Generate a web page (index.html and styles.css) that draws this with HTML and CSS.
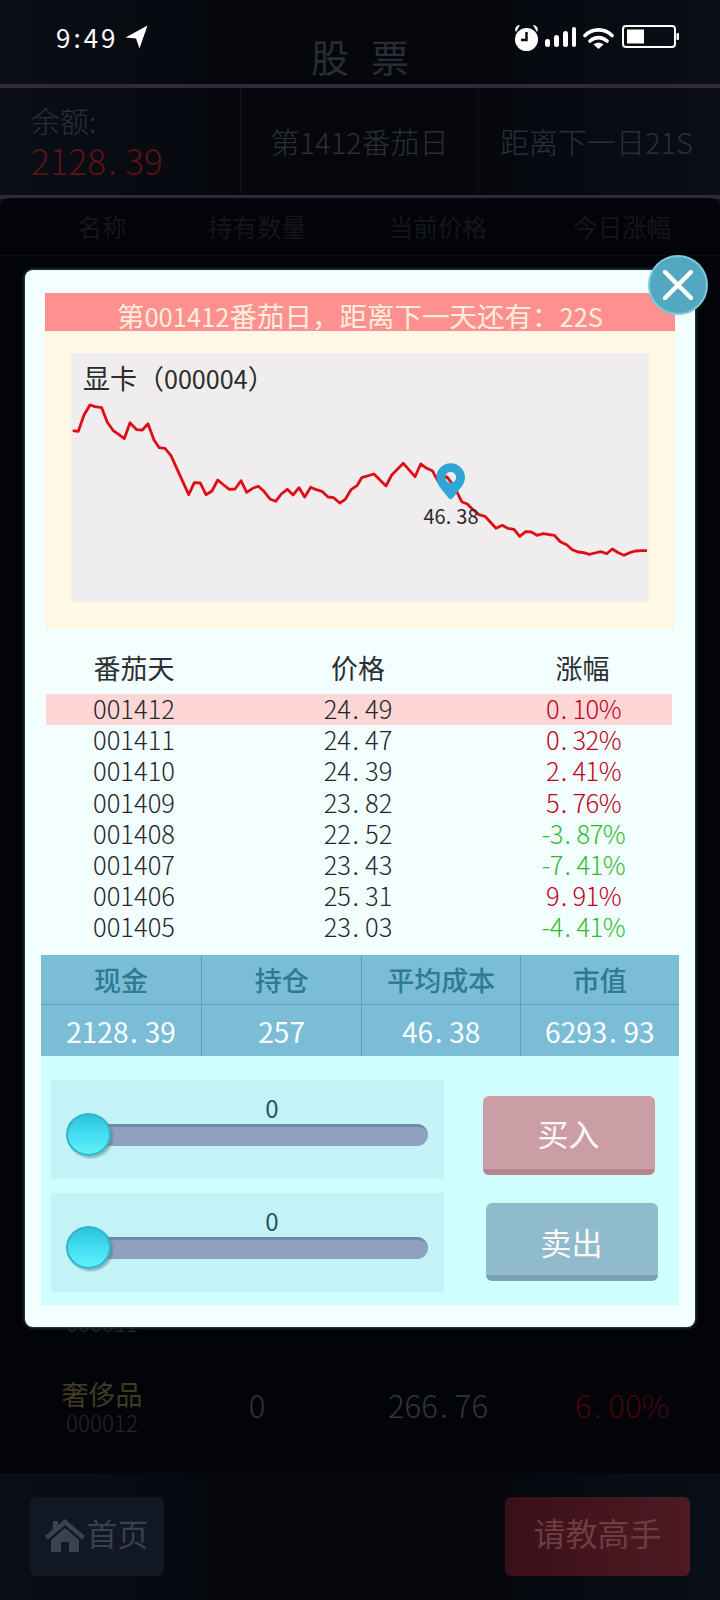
FILE: index.html
```html
<!DOCTYPE html>
<html lang="zh">
<head>
<meta charset="utf-8">
<title>股票</title>
<link rel="stylesheet" href="styles.css">
</head>
<body>
<div class="app">
  <div class="status">
    <div class="status-left">
      <span class="time">9:49</span>
      <svg class="loc" viewBox="0 0 23 24"><path d="M22.5 0.5 0.5 12.5 11 13.5 14.5 23.5Z" fill="#fff"/></svg>
    </div>
    <div class="status-right">
      <svg class="ic-alarm" viewBox="0 0 27 28"><circle cx="13.5" cy="15.5" r="11.5" fill="#fff"/><path d="M3 8C1 5 3 1 7 1ZM24 8C26 5 24 1 20 1Z" fill="#fff"/><path d="M13.5 8V16H8" fill="none" stroke="#07090f" stroke-width="2.4"/></svg>
      <svg class="ic-signal" viewBox="0 0 31 20"><rect x="0" y="12" width="5" height="8" rx="2.5" fill="#fff"/><rect x="9" y="8" width="5" height="12" rx="2.5" fill="#fff"/><rect x="18" y="4" width="5" height="16" rx="2.5" fill="#fff"/><rect x="27" y="0" width="4" height="20" rx="2" fill="#fff"/></svg>
      <svg class="ic-wifi" viewBox="0 0 31 22"><path d="M2 8.5C9.500 1 21.500 1 29 8.500M7 14C12 9.500 19 9.500 24 14" fill="none" stroke="#fff" stroke-width="3.600" stroke-linecap="round"/><path d="M15.500 22 10.500 17.500C13 15 18 15 20.500 17.500Z" fill="#fff"/></svg>
      <svg class="ic-batt" viewBox="0 0 57 23"><rect x="1" y="1" width="52" height="21" rx="3" fill="none" stroke="#fff" stroke-width="2"/><rect x="5" y="4.500" width="17" height="14" fill="#fff"/><rect x="54.500" y="8" width="2.500" height="7" rx="1" fill="#fff"/></svg>
    </div>
  </div>

  <header class="title-bar"><h1 class="title">股票</h1></header>

  <section class="info">
    <div class="info-cell balance">
      <div class="balance-label">余额:</div>
      <div class="balance-value">2128<span class="pt">.</span>39</div>
    </div>
    <div class="info-cell mid">第1412番茄日</div>
    <div class="info-cell last">距离下一日21S</div>
  </section>

  <main class="panel">
    <div class="panel-head">
      <span>名称</span><span>持有数量</span><span>当前价格</span><span>今日涨幅</span>
    </div>
    <div class="panel-list">
      <div class="stock-row">
        <div class="stock-name prev"><span class="code">000011</span></div>
      </div>
      <div class="stock-row">
        <div class="stock-name"><span class="name">奢侈品</span><span class="code">000012</span></div>
        <span class="stock-val">0</span>
        <span class="stock-val">266<span class="pt">.</span>76</span>
        <span class="stock-val dim-red">6<span class="pt">.</span>00%</span>
      </div>
    </div>
  </main>

  <footer class="bottom">
    <div class="btn-home">
      <svg class="home-ic" viewBox="0 0 40 33"><path d="M20 0 40 17 37 20.500 20 6 3 20.500 0 17 8 10V2H13V6Z" fill="#39424f"/><path d="M20 9 34 21V33H24V23H16V33H6V21Z" fill="#39424f"/></svg>
      <span>首页</span>
    </div>
    <div class="btn-ask">请教高手</div>
  </footer>

  <div class="modal">
    <button class="close" type="button" aria-label="关闭">
      <svg viewBox="0 0 30 30"><path d="M2 2 28 28M28 2 2 28" stroke="#fff" stroke-width="4.500" stroke-linecap="round"/></svg>
    </button>
    <div class="notice">第<span class="num">001412</span>番茄日，距离下一天还有：<span class="num">22S</span></div>
    <div class="chart-wrap">
      <div class="chart">
        <div class="chart-title">显卡（<span class="num">000004</span>）</div>
        <svg class="chart-svg" viewBox="71 353 578 249">
          <polyline class="line" points="72.700,430.700 78.300,431.300 84,415 90,405 95,406.700 101.700,407.700 107.300,422.300 113.300,430.700 119,434.700 124.300,438.700 130,422.700 136.700,429.700 142.300,430 148,423.700 154,440 159.300,447.700 165,448.300 171,455.700 188.700,494.700 194.300,482.700 200.300,483 206,494.700 212,491 217.700,480 223.700,485 229.300,489.300 235,489 241,480.700 246.700,492.300 252.700,488.300 258.300,486.300 264,491.300 270,499 275.700,501.300 281.300,494 287.300,489.300 293,495 299,487.700 304.700,497 310.700,487.300 316.300,489.700 322,491.300 328,497 333.700,497.700 339.700,503 345.300,499.300 351,489.700 357,485.700 361.700,477.700 374,474 386,486 391.700,475 403.300,463.300 415,476.700 420.700,464 426.700,468.300 432.300,470.700 438.300,481.700 446.700,476.700 450.700,481.700 456.700,491.700 461.700,501.700 467.300,504 473.300,510 479,514.700 485,516.300 496,528.300 502.300,525.300 507.700,528.300 514,529.300 519.700,536.300 525.700,531.700 531.300,532 537,535.300 543,533.700 554.300,535.300 560.300,541.700 566.700,544.700 572.300,549.700 578,552 583.700,552.700 589.300,554.300 595,553 600.700,551.700 606.700,553.700 612.300,549 618.300,552.700 624,555.300 629.700,552.700 635.300,551 641.300,550.700 647,550.700"/>
          <path class="pin" fill-rule="evenodd" d="M450.700 463.300C442.700 463.300 436.300 469.700 436.300 477.500C436.300 481 438 484.500 440 487.500L449 498.500C450 499.600 451.400 499.600 452.400 498.500L461 487.500C463.300 484.500 465 481 465 477.500C465 469.700 458.700 463.300 450.700 463.300ZM450.700 471.800A5.500 5.500 0 1 1 450.700 482.800A5.500 5.500 0 1 1 450.700 471.800Z"/>
          <text class="pin-label" x="451" y="524">46<tspan dx="0">.</tspan><tspan dx="5">38</tspan></text>
        </svg>
      </div>
    </div>

    <div class="history">
      <div class="hist-row hist-head"><span>番茄天</span><span>价格</span><span>涨幅</span></div>
      <div class="hist-row today"><span>001412</span><span>24<span class="pt">.</span>49</span><span class="up">0<span class="pt">.</span>10%</span></div>
      <div class="hist-row"><span>001411</span><span>24<span class="pt">.</span>47</span><span class="up">0<span class="pt">.</span>32%</span></div>
      <div class="hist-row"><span>001410</span><span>24<span class="pt">.</span>39</span><span class="up">2<span class="pt">.</span>41%</span></div>
      <div class="hist-row"><span>001409</span><span>23<span class="pt">.</span>82</span><span class="up">5<span class="pt">.</span>76%</span></div>
      <div class="hist-row"><span>001408</span><span>22<span class="pt">.</span>52</span><span class="down">-3<span class="pt">.</span>87%</span></div>
      <div class="hist-row"><span>001407</span><span>23<span class="pt">.</span>43</span><span class="down">-7<span class="pt">.</span>41%</span></div>
      <div class="hist-row"><span>001406</span><span>25<span class="pt">.</span>31</span><span class="up">9<span class="pt">.</span>91%</span></div>
      <div class="hist-row"><span>001405</span><span>23<span class="pt">.</span>03</span><span class="down">-4<span class="pt">.</span>41%</span></div>
    </div>

    <div class="stats">
      <div class="stat-h">现金</div><div class="stat-h">持仓</div><div class="stat-h">平均成本</div><div class="stat-h">市值</div>
      <div class="stat-v">2128<span class="pt">.</span>39</div><div class="stat-v">257</div><div class="stat-v">46<span class="pt">.</span>38</div><div class="stat-v">6293<span class="pt">.</span>93</div>
    </div>

    <div class="trade">
      <div class="sliders">
        <div class="slider-box">
          <div class="slider-num">0</div>
          <div class="track"><span class="thumb"></span></div>
        </div>
        <div class="slider-box">
          <div class="slider-num">0</div>
          <div class="track"><span class="thumb"></span></div>
        </div>
      </div>
      <div class="actions">
        <button class="act buy" type="button">买入</button>
        <button class="act sell" type="button">卖出</button>
      </div>
    </div>
  </div>
</div>
</body>
</html>
```
FILE: styles.css
```css
* { box-sizing: border-box; }
html, body { margin: 0; padding: 0; }
body {
  font-family: "Noto Sans CJK SC", "Noto Sans", sans-serif;
  font-weight: 400;
  background: #05070d;
}
.app {
  position: relative;
  width: 720px;
  height: 1600px;
  overflow: hidden;
  display: flex;
  flex-direction: column;
  background: linear-gradient(90deg, #0a0f18 0%, #05070c 35%, #05070c 65%, #0a0f18 100%);
}
.pt { padding: 0 .24em 0 .06em; }
.num { font-size: .93em; }

/* status bar */
.status {
  position: absolute;
  top: 0;
  left: 0;
  right: 0;
  height: 74px;
  padding: 24px 41px 0 56px;
  display: flex;
  justify-content: space-between;
  align-items: flex-start;
  color: #fff;
}
.status-left { display: flex; align-items: center; gap: 6px; height: 26px; }
.time { font-size: 26px; line-height: 26px; letter-spacing: 3px; }
.loc { width: 23px; height: 24px; }
.status-right { display: flex; align-items: flex-start; }
.ic-alarm { width: 27px; height: 28px; }
.ic-signal { width: 31px; height: 20px; margin: 3px 0 0 5px; }
.ic-wifi { width: 31px; height: 22px; margin: 3px 0 0 7px; }
.ic-batt { width: 57px; height: 23px; margin: 1px 0 0 8px; }

/* title */
.title-bar {
  height: 88px;
  border-bottom: 4px solid #33293a;
  text-align: center;
}
.title {
  margin: 0;
  padding: 31px 0 0 22px;
  font-size: 38px;
  line-height: 50px;
  font-weight: 400;
  letter-spacing: 22px;
  color: #2a2d35;
}

/* info */
.info {
  height: 111px;
  flex: none;
  display: grid;
  grid-template-columns: 241px 238px 241px;
  border-bottom: 4px solid #33293a;
  color: #2c2f37;
}
.info-cell { display: flex; align-items: center; justify-content: center; font-size: 29px; font-weight: 300; padding-bottom: 2px; border-right: 1px solid #11141b; white-space: nowrap; }
.info-cell.last { border-right: 0; padding-right: 6px; }
.balance { flex-direction: column; align-items: flex-start; padding-left: 31px; }
.balance-label { font-size: 29px; line-height: 38px; margin-top: 3px; margin-bottom: -2px; }
.balance-value { font-size: 35px; line-height: 46px; color: #5a1414; }

/* panel */
.panel {
  flex: 1;
  display: flex;
  flex-direction: column;
  min-height: 0;
  background: #03040a;
  border-radius: 10px 10px 0 0;
  margin-top: -1px;
}
.panel-head {
  height: 58px;
  flex: none;
  padding: 0 0 1px 12px;
  display: grid;
  grid-template-columns: 180px 130px 232px 136px;
  align-items: center;
  justify-items: center;
  font-size: 24.500px;
  color: #14161c;
  border-bottom: 1px solid #0b0c10;
}
.panel-list {
  flex: 1;
  display: flex;
  flex-direction: column;
  justify-content: flex-end;
  padding-bottom: 17px;
}
.stock-row {
  height: 99px;
  flex: none;
  padding-left: 12px;
  display: grid;
  grid-template-columns: 180px 130px 232px 136px;
  align-items: center;
  justify-items: center;
  font-size: 31px;
  font-weight: 300;
  color: #31353d;
}
.stock-name { display: flex; flex-direction: column; align-items: center; }
.stock-name.prev { margin-top: 28px; }
.stock-val { margin-bottom: 4px; }
.name { font-size: 27px; font-weight: 400; line-height: 34px; margin-bottom: -4px; color: #403b22; }
.code { font-size: 22.500px; line-height: 30px; color: #23272f; }
.dim-red { color: #440609; }

/* bottom */
.bottom {
  height: 127px;
  flex: none;
  padding: 24px 30px 24px;
  display: flex;
  justify-content: space-between;
  align-items: flex-start;
}
.btn-home {
  width: 134px;
  height: 79px;
  border-radius: 6px;
  background: #111824;
  display: flex;
  align-items: center;
  justify-content: center;
  gap: 2px;
  font-size: 31px;
  color: #39404c;
  padding: 0 1px 9px 0;
}
.home-ic { width: 40px; height: 33px; flex: none; margin-top: 7px; }
.btn-ask {
  width: 185px;
  height: 79px;
  border-radius: 6px;
  background: linear-gradient(90deg, #3a1018, #4e1a24);
  display: flex;
  align-items: center;
  justify-content: center;
  font-size: 32px;
  color: #6d3d42;
  padding-bottom: 9px;
}

/* modal */
.modal {
  position: absolute;
  top: 270px;
  left: 25px;
  width: 670px;
  height: 1057px;
  padding: 23px 16px 0;
  background: #f3ffff;
  border-radius: 8px;
  box-shadow: 0 0 3px 1px #2b4a55;
}
.close {
  position: absolute;
  top: -15px;
  right: -13px;
  width: 60px;
  height: 60px;
  padding: 13px;
  border-radius: 50%;
  border: 2px solid #80c9d8;
  background: #53a8c1;
}
.close svg { display: block; width: 30px; height: 30px; }
.notice {
  margin: 0 4px;
  height: 38px;
  padding-top: 4px;
  background: #ff9090;
  color: #ffeedd;
  font-size: 27.500px;
  line-height: 37px;
  text-align: center;
  white-space: nowrap;
}
.chart-wrap {
  margin: 0 4px;
  height: 298px;
  padding: 22px 26px 27px;
  background: #fff8e6;
}
.chart { position: relative; width: 578px; height: 249px; background: #efeded; }
.chart-title {
  position: absolute;
  top: 8px;
  left: 12px;
  font-size: 27px;
  line-height: 34px;
  color: #2c2c2c;
  white-space: nowrap;
}
.chart-svg { display: block; width: 578px; height: 249px; }
.line { fill: none; stroke: #e00d16; stroke-width: 2.800; stroke-linejoin: round; }
.pin { fill: #2fa6d6; }
.pin-label { font-size: 20px; fill: #2c2c2c; text-anchor: middle; }

/* history */
.history { padding: 13px 7px 0 5px; height: 326px; color: #22262a; font-size: 25.500px; font-weight: 300; }
.hist-row {
  display: grid;
  grid-template-columns: 176px 272px 177px;
  justify-items: center;
  align-items: center;
  height: 31.200px;
  padding-bottom: 3px;
  line-height: 28px;
}
.hist-head { height: 52px; padding-bottom: 0; color: #2b2f33; font-size: 27px; font-weight: 400; }
.today { background: #ffd6d6; }
.up { color: #c4001c; letter-spacing: -.6px; padding-left: 2px; }
.down { color: #2fbb2c; letter-spacing: -.5px; padding-left: 2px; }

/* stats */
.stats {
  height: 101px;
  display: grid;
  grid-template-columns: 161px 160.300px 158.700px 157.700px;
  grid-template-rows: 50px 51px;
  background: #7bbdd6;
}
.stat-h, .stat-v {
  display: flex;
  align-items: center;
  justify-content: center;
  border-right: 1px solid #5f9db6;
}
.stat-h:nth-child(4), .stat-v:nth-child(8) { border-right: 0; }
.stat-h {
  border-bottom: 1px solid #5f9db6;
  font-size: 27px;
  font-weight: 500;
  color: #2f7a92;
}
.stat-v { font-size: 28px; color: #f8feff; }

/* trade */
.trade {
  height: 249px;
  padding: 24px 0 0 10px;
  display: flex;
  background: #d0fdfe;
}
.sliders { display: flex; flex-direction: column; gap: 14px; width: 393px; }
.slider-box { height: 99px; padding: 14px 16px 0 24px; background: #c3f3f6; }
.slider-num { height: 30px; padding-left: 41px; text-align: center; font-size: 24px; line-height: 27px; color: #1d5a66; }
.track {
  position: relative;
  height: 22px;
  border-radius: 0 11px 11px 0;
  background: #8ea1bf;
  border-top: 3px solid #6f8bab;
}
.thumb {
  position: absolute;
  top: -14px;
  left: -9px;
  width: 45px;
  height: 43px;
  border-radius: 50%;
  background: linear-gradient(180deg, #2dc1dc 0%, #40dcef 45%, #5ff0fb 100%);
  border: 2px solid #2fb4ca;
  box-shadow: 2px 2px 2px rgba(80, 110, 120, .5);
}
.actions { padding: 16px 0 0 38.500px; display: flex; flex-direction: column; align-items: flex-start; }
.act {
  display: block;
  width: 172px;
  padding: 0;
  border: 0;
  border-radius: 6px;
  font: inherit;
  font-size: 31px;
  color: #fdf7f7;
  text-align: center;
}
.buy { height: 79px; background: #cb9ea5; border-bottom: 6px solid #b5848d; }
.sell { height: 78px; margin: 28px 0 0 3px; padding-top: 4px; background: #8fbbcc; border-bottom: 6px solid #7a9fb2; }
```
